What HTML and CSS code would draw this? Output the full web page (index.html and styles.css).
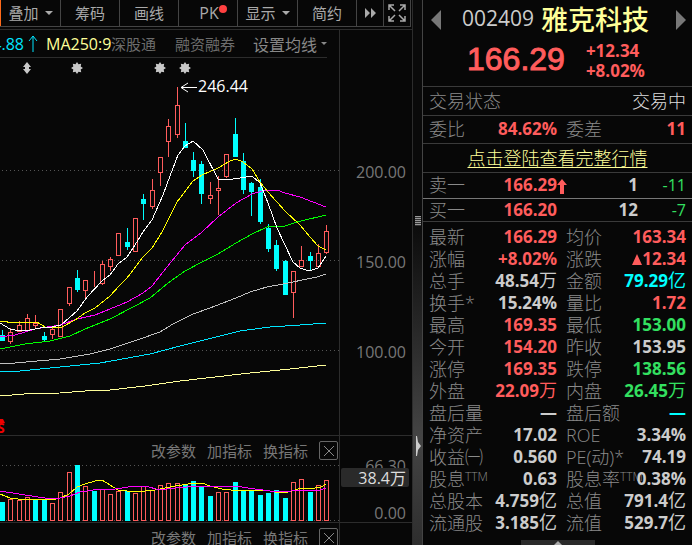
FILE: index.html
```html
<!DOCTYPE html>
<html lang="zh-CN">
<head>
<meta charset="utf-8">
<title>雅克科技 002409</title>
<link rel="stylesheet" href="styles.css">
</head>
<body>
<main class="app">
  <section class="chart">
    <nav class="toolbar">
      <button class="tool tool-active">叠加<i class="caret"></i></button>
      <button class="tool">筹码</button>
      <button class="tool">画线</button>
      <button class="tool tool-pk">PK<i class="dot"></i></button>
      <button class="tool">显示<i class="caret"></i></button>
      <button class="tool">简约</button>
      <button class="tool tool-icon" aria-label="更多">
        <svg width="13" height="10" viewBox="0 0 13 10"><path d="M1 0L6 5L1 10ZM7 0L12 5L7 10Z" fill="#aaa"/></svg>
      </button>
      <button class="tool tool-icon" aria-label="全屏">
        <svg width="18" height="18" viewBox="0 0 18 18" fill="none" stroke="#aaa" stroke-width="1.5"><path d="M1 6V1H6M12 1H17V6M17 12V17H12M6 17H1V12M1 1L7 7M17 1L11 7M17 17L11 11M1 17L7 11"/></svg>
      </button>
    </nav>

    <div class="panes">
      <div class="pane">
        <div class="legend">
          <span class="ma120">4.88</span>
          <svg class="up" width="10" height="17" viewBox="0 0 10 17" fill="none" stroke="#00e5ff"><path d="M5 17V1M1 6L5 1L9 6"/></svg>
          <span class="ma250">MA250:9</span>
          <a class="tag" href="#sgt">深股通</a>
          <a class="tag tag-margin" href="#rzrq">融资融券</a>
          <button class="ma-set">设置均线<i class="caret"></i></button>
        </div>
        <svg class="plot" id="price" viewBox="0 0 339 377" shape-rendering="crispEdges">
          <g transform="translate(0 -58)">
            <path class="dots" d="M2 170.5H339M2 260.5H339M2 350.5H339"/>
            <g id="candles"></g>
            <polyline class="line" stroke="#ffff99" points="0,396 24,394 60,393 85,391 110,390 145,386 180,381 215,377 250,373 290,369 326,365"/>
            <polyline class="line" stroke="#00e5ff" points="0,371 20,371 60,367 100,363 128,358 150,354 180,346 200,341 220,336 240,331 270,327 300,325 326,323"/>
            <polyline class="line" stroke="#c0c0c0" points="0,363 15,363 60,359 90,354 110,349 140,339 160,332 173,324 193,314 210,308 236,298 250,292 267,287 283,284 317,277 326,274"/>
            <polyline class="line" stroke="#00ff00" points="0,349 25,344 50,341 70,336 85,329 110,319 135,306 150,298 168,283 185,271 202,262 218,254 236,243 252,234 267,227 285,226 297,222 326,215"/>
            <polyline class="line" stroke="#ff00ff" points="0,337 15,335 35,329 60,325 77,319 95,315 110,309 127,302 143,293 152,286 167,267 185,245 202,232 218,217 236,203 252,194 262,191 277,190 285,193 300,197 326,207"/>
            <polyline class="line" stroke="#ffff00" points="0,321 15,323 37,322 45,327 52,328 62,327 75,320 85,313 95,308 110,296 119,286 127,278 143,257 152,248 162,232 177,202 193,181 202,175 218,168 230,161 236,159 243,162 252,169 260,182 268,192 285,211 300,225 310,237 318,246 326,250"/>
            <polyline class="line" stroke="#ffffff" points="0,323 10,329 20,331 30,330 40,328 52,327 61,325 77,311 87,297 102,281 110,275 118,264 127,257 135,245 143,232 152,220 163,195 170,176 178,155 185,146 193,141 203,150 218,179 226,180 240,178 252,176 260,183 268,203 277,228 285,245 293,262 300,268 309,271 318,268 326,256"/>
            <g class="marks">
              <path d="M27 62L31 67H29V69H31L27 74L23 69H25V67H23Z"/>
              <g id="stars"></g>
            </g>
            <path class="pointer" d="M181 87.5H197M188 83L181 87.5L188 92"/>
            <text class="peak" x="198" y="92">246.44</text>
            <g shape-rendering="auto">
              <path d="M-2 423L0 419H3L5 423Z" fill="#f00000"/>
              <text class="bonus" x="-3" y="433">S</text>
            </g>
          </g>
        </svg>
      </div>
      <div class="axis axis-price"><span>200.00</span><span>150.00</span><span>100.00</span></div>

      <div class="pane">
        <div class="actions">
          <button>改参数</button><button>加指标</button><button>换指标</button>
          <button class="close" aria-label="关闭"><svg width="10" height="10" viewBox="0 0 10 10" stroke="#888"><path d="M0 0L10 10M10 0L0 10"/></svg></button>
        </div>
        <svg class="plot" id="volume" viewBox="0 0 339 60" shape-rendering="crispEdges">
          <g transform="translate(0 -462)">
            <path class="dots" d="M2 465.5H339M2 520.5H339"/>
            <g id="bars"></g>
            <polyline class="line" stroke="#ffff00" points="0,494 10,498 18,499 45,499 52,500 60,498 69,494 77,487 85,484 95,481 102,480 110,485 118,490 135,492 155,490 175,486 195,483 202,483 210,486 222,489 240,491 265,490 275,492 285,493 298,489 315,488 321,487 326,484"/>
            <polyline class="line" stroke="#ff00ff" points="0,491 25,495 45,498 55,499 70,496 80,492 100,489 115,489 135,486 145,486 160,490 175,488 200,486 235,486 255,489 270,491 285,492 298,490 320,490 326,488"/>
          </g>
        </svg>
      </div>
      <div class="axis axis-volume"><span>66.30</span><span>0.00</span><output class="badge">38.4万</output></div>

      <div class="pane">
        <div class="actions">
          <button>改参数</button><button>加指标</button><button>换指标</button>
          <button class="close" aria-label="关闭"><svg width="10" height="10" viewBox="0 0 10 10" stroke="#888"><path d="M0 0L10 10M10 0L0 10"/></svg></button>
        </div>
      </div>
      <div class="axis"></div>
    </div>
  </section>

  <div class="splitter">
    <i class="grip"></i>
    <svg class="collapse" width="5" height="20" viewBox="0 0 5 20"><path d="M0 0H1L2 6L5 10L2 14L1 20H0Z" fill="#ccc"/></svg>
  </div>

  <aside class="quote">
    <header class="head">
      <div class="name-row">
        <button class="step" aria-label="上一只"><svg width="10" height="20" viewBox="0 0 10 20"><path d="M10 0V20L0 10Z" fill="#777"/></svg></button>
        <h1><span class="code">002409</span><span class="name">雅克科技</span></h1>
        <button class="step" aria-label="下一只"><svg width="10" height="20" viewBox="0 0 10 20"><path d="M0 0V20L10 10Z" fill="#777"/></svg></button>
      </div>
      <div class="price-row">
        <strong class="price">166.29</strong>
        <div class="change"><span>+12.34</span><span>+8.02%</span></div>
      </div>
    </header>
    <div class="state"><span>交易状态</span><span class="open">交易中</span></div>
    <table class="grid ratio">
      <colgroup><col class="c-label"><col class="c-value"><col class="c-label2"><col></colgroup>
      <tr><th>委比</th><td class="red">84.62%</td><th>委差</th><td class="red">11</td></tr>
    </table>
    <div class="login"><a href="#login">点击登陆查看完整行情</a></div>
    <table class="book">
      <colgroup><col class="c-label"><col><col class="c-arrow"><col class="c-qty"><col class="c-delta"></colgroup>
      <tr><th>卖一</th><td class="red">166.29</td><td class="mark"><svg class="tick" width="10" height="15" viewBox="0 0 10 15"><path d="M5 0L10 6H7V15H3V6H0Z" fill="#ff5c5c"/></svg></td><td>1</td><td class="delta">-11</td></tr>
      <tr><th>买一</th><td class="red">166.20</td><td></td><td>12</td><td class="delta">-7</td></tr>
    </table>
    <table class="grid stats">
      <colgroup><col class="c-label"><col class="c-value"><col class="c-label2"><col></colgroup>
      <tr><th>最新</th><td class="red">166.29</td><th>均价</th><td class="red">163.34</td></tr>
      <tr><th>涨幅</th><td class="red">+8.02%</td><th>涨跌</th><td class="red"><svg width="10" height="11" viewBox="0 0 10 11"><path d="M5 0L10 11H0Z" fill="#ff5c5c"/></svg>12.34</td></tr>
      <tr><th>总手</th><td>48.54<b>万</b></td><th>金额</th><td class="cyan">79.29<b>亿</b></td></tr>
      <tr><th>换手*</th><td>15.24%</td><th>量比</th><td class="red">1.72</td></tr>
      <tr><th>最高</th><td class="red">169.35</td><th>最低</th><td class="green">153.00</td></tr>
      <tr><th>今开</th><td class="red">154.20</td><th>昨收</th><td>153.95</td></tr>
      <tr><th>涨停</th><td class="red">169.35</td><th>跌停</th><td class="green">138.56</td></tr>
      <tr><th>外盘</th><td class="red">22.09<b>万</b></td><th>内盘</th><td class="green">26.45<b>万</b></td></tr>
      <tr><th>盘后量</th><td>—</td><th>盘后额</th><td class="cyan">—</td></tr>
      <tr><th>净资产</th><td>17.02</td><th>ROE</th><td>3.34%</td></tr>
      <tr><th>收益㈠</th><td>0.560</td><th>PE(动)*</th><td>74.19</td></tr>
      <tr><th>股息<sup>TTM</sup></th><td>0.63</td><th>股息率<sup>TTM</sup></th><td>0.38%</td></tr>
      <tr><th>总股本</th><td>4.759<b>亿</b></td><th>总值</th><td>791.4<b>亿</b></td></tr>
      <tr><th>流通股</th><td>3.185<b>亿</b></td><th>流值</th><td>529.7<b>亿</b></td></tr>
    </table>
    <button class="expand" aria-label="展开"><svg width="8" height="4" viewBox="0 0 8 4"><path d="M0 4L4 0L8 4Z" fill="#aaa"/></svg></button>
  </aside>
</main>
<script src="app.js"></script>
</body>
</html>
```
FILE: styles.css
```css
* { box-sizing: border-box; }

body {
  margin: 0;
  background: #070707;
  color: #ccc;
  font-family: "Open Sans", "Noto Sans CJK SC", sans-serif;
  font-size: 16px;
  white-space: nowrap;
}

button {
  margin: 0;
  padding: 0;
  border: 0;
  background: none;
  color: inherit;
  font: inherit;
}

a { color: inherit; text-decoration: none; }
svg { display: block; }

.app {
  display: flex;
  height: 100vh;
  overflow: hidden;
}

/* Chart side */
.chart {
  flex: 1;
  min-width: 0;
  border-right: 1px solid #2c2c2c;
}

.toolbar {
  display: grid;
  grid-template-columns: 61fr 59fr 59fr 59fr 60fr 59fr 27px 27px;
  height: 27px;
  margin-right: 1px;
  border-bottom: 1px solid #444;
}

.tool {
  display: flex;
  align-items: center;
  justify-content: center;
  gap: 6px;
  border-right: 1px solid #444;
  color: #aaa;
  font-size: 15px;
  line-height: 26px;
}

.tool-active { border-left: 1px solid #ff6a1a; }
.tool-pk { gap: 0; padding-left: 10px; font-size: 16px; }

.caret {
  border: 4px solid transparent;
  border-top-color: #aaa;
  border-bottom: 0;
}

.dot {
  width: 8px;
  height: 8px;
  margin-bottom: 8px;
  border-radius: 50%;
  background: #ff4040;
}

.panes {
  display: grid;
  grid-template-columns: 1fr 73px;
  grid-template-rows: 406px 87px 1fr;
  margin-top: 2px;
  border-top: 1px solid #2c2c2c;
}

.pane, .axis { border-bottom: 1px solid #2c2c2c; }
.pane { min-width: 0; }

.axis {
  position: relative;
  border-left: 1px solid #2c2c2c;
  padding-right: 6px;
  color: #777;
  text-align: right;
}

.axis span { display: block; }

.legend {
  display: flex;
  align-items: center;
  height: 28px;
  margin-right: 12px;
  border-bottom: 1px solid #2c2c2c;
}

.ma120 {
  display: flex;
  flex: none;
  justify-content: flex-end;
  width: 24px;
  overflow: hidden;
  color: #00e5ff;
}

.up { flex: none; margin: 0 8px 0 4px; }
.ma250 { width: 65px; color: #ffff99; }
.tag { color: #6c6c6c; font-size: 15px; }
.tag-margin { margin: 0 18px 0 19px; }

.ma-set {
  display: flex;
  align-items: center;
  gap: 4px;
  color: #888;
}

.ma-set .caret { border-width: 3px; border-bottom: 0; border-top-color: #888; }

.plot { width: 100%; overflow: hidden; }
.dots { stroke: #555; stroke-dasharray: 1 3; }
.line { fill: none; stroke-width: 1; }
.marks { fill: #c8c8c8; shape-rendering: auto; }
.up-bar { fill: none; stroke: #ff5c5c; }
.down-bar { fill: #00ffff; }
.pointer { fill: none; stroke: #fff; shape-rendering: auto; }
.peak { fill: #fff; font-size: 16px; }
.bonus { fill: #f00000; font-size: 14px; font-weight: 700; }

.axis-price { padding-top: 130px; }
.axis-price span { height: 90px; line-height: 24px; }

.axis-volume {
  display: flex;
  flex-direction: column;
  justify-content: space-between;
  padding-top: 21px;
  line-height: 18px;
}

.badge {
  position: absolute;
  top: 32px;
  right: 3px;
  left: 1px;
  height: 19px;
  padding-right: 3px;
  border-radius: 2px;
  background: #2a2a2a;
  color: #ddd;
  line-height: 20px;
}

.actions {
  display: flex;
  align-items: center;
  justify-content: flex-end;
  gap: 11px;
  height: 26px;
  padding: 3px 1px 0 0;
  color: #777;
  font-size: 15px;
  line-height: 20px;
}

.close {
  display: grid;
  place-items: center;
  width: 19px;
  height: 19px;
  border: 1px solid #666;
  border-radius: 2px;
}

/* Divider between the chart and the quote */
.splitter {
  position: relative;
  width: 9px;
  background: linear-gradient(#0a0a0a 40%, #444 80%, #2e2e2e);
}

.grip {
  position: absolute;
  top: 216px;
  left: 2px;
  width: 6px;
  height: 10px;
  background: repeating-linear-gradient(#999 0 1px, #333 1px 2px);
}

.collapse { position: absolute; top: 436px; left: 3px; }

/* Quote side */
.quote {
  position: relative;
  width: 270px;
  border-left: 1px solid #444;
}

.head { height: 87px; border-bottom: 1px solid #3a3a3a; }

.name-row {
  display: flex;
  align-items: center;
  justify-content: space-between;
  height: 40px;
  padding: 0 6px 0 8px;
}

h1 {
  display: flex;
  align-items: center;
  gap: 7px;
  margin: 0 6px 0 0;
  font-weight: 400;
  line-height: 40px;
}

.code { font-size: 21px; line-height: 36px; padding-bottom: 4px; }
.name { color: #ffff99; font-size: 27px; font-weight: 500; }

.price-row {
  display: flex;
  align-items: center;
  gap: 21px;
  padding-left: 44px;
  color: #ff5c5c;
}

.price {
  padding-bottom: 3px;
  font-family: "Liberation Sans", sans-serif;
  font-size: 32px;
  font-weight: 400;
  line-height: 38px;
  -webkit-text-stroke: 1px #ff5c5c;
}

.change {
  display: grid;
  font-size: 17px;
  font-weight: 700;
  line-height: 20px;
}

.state {
  display: flex;
  justify-content: space-between;
  padding: 0 6px;
  border-bottom: 1px solid #3a3a3a;
  color: #8a8a8a;
  font-size: 18px;
  font-weight: 300;
  line-height: 28px;
}

.open { color: #ddd; }

table {
  width: 100%;
  table-layout: fixed;
  border-collapse: collapse;
}

th, td { padding: 0; line-height: 22px; }
tr { height: 22px; }

th {
  color: #8a8a8a;
  font-size: 18px;
  font-weight: 300;
  text-align: left;
}

td {
  font-size: 17px;
  font-weight: 700;
  text-align: right;
}

td b { font-size: 18px; font-weight: 400; line-height: 20px; }
td svg { display: inline-block; }

.grid td:last-child, .book td:last-child { padding-right: 6px; }
.grid th, .book th { padding-left: 6px; }
.grid th + td + th { padding-left: 9px; }
.c-label { width: 60px; }
.c-value { width: 74px; }
.c-label2 { width: 55px; }
.c-arrow { width: 13px; }
.c-qty { width: 68px; }
.c-delta { width: 54px; }

.ratio { border-bottom: 1px solid #3a3a3a; }
.ratio tr { height: 27px; }

.login {
  border-bottom: 1px solid #3a3a3a;
  color: #ffff99;
  font-size: 18px;
  font-weight: 300;
  line-height: 28px;
  text-align: center;
}

.login a { text-decoration: underline; text-underline-offset: 2px; }

.book { border-bottom: 1px solid #3a3a3a; }
.book tr:first-child { height: 26px; border-bottom: 1px solid #777; }
.book .delta { color: #33e060; font-size: 16px; font-weight: 400; }
.book .mark { text-align: left; line-height: 18px; }
.tick { vertical-align: middle; }

.stats { margin-top: 4px; }

sup {
  font-size: 12px;
  line-height: 12px;
  vertical-align: 5px;
}

.red { color: #ff5c5c; }
.green { color: #33e060; }
.cyan { color: #00ffff; }

.expand {
  position: absolute;
  bottom: 0;
  left: 98px;
  display: grid;
  place-items: center;
  width: 74px;
  height: 5px;
  background: #2a2a2a;
}
```
FILE: app.js
```js
// Each candle: centre x, high, body top, body bottom, low, falling (1) or rising (0), volume top
const data = [
  [2,330,335,341,341,1,502],[10,328,332,341,344,0,499],[19,321,325,331,331,0,500],
  [27,314,318,330,330,0,497],[35,315,323,325,328,0,499,1],[44,332,336,340,341,1,499],
  [52,327,329,334,339,0,503],[60,309,309,336,337,0,492],[69,287,287,303,306,0,472],
  [77,270,278,290,292,1,465],[85,280,280,290,299,0,486],[94,271,282,282,287,0,491,1],
  [102,261,264,283,285,0,489],[110,257,259,266,271,0,494],[118,233,233,255,255,0,491],
  [127,228,242,247,250,1,491],[135,218,218,251,251,0,493],[143,194,199,204,220,1,486,2],
  [152,179,190,206,209,0,490],[160,157,157,172,186,0,485],[168,119,126,141,157,0,483],
  [177,87,105,134,138,0,483],[185,123,141,148,148,1,485],[193,152,160,171,177,1,481],
  [201,161,164,194,204,1,487],[210,182,195,198,204,0,496,1],[218,176,188,190,215,0,492],
  [226,154,154,176,178,0,492],[235,118,134,157,157,1,482],[243,153,161,190,194,1,491],
  [251,182,183,192,216,1,491],[260,179,187,222,224,1,495],[268,224,228,249,252,1,493],
  [276,240,245,269,271,1,490],[285,260,261,295,295,1,498],[293,271,271,292,318,0,482],
  [301,246,260,266,266,0,479],[310,252,256,261,270,1,492],[318,244,253,266,268,0,485],
  [326,225,231,252,254,0,480]
];

const NS = "http://www.w3.org/2000/svg";

function add(parent, tag, attrs) {
  const el = document.createElementNS(NS, tag);
  for (const key in attrs) el.setAttribute(key, attrs[key]);
  document.getElementById(parent).appendChild(el);
}

function bar(parent, x, top, bottom, falling) {
  if (falling) {
    add(parent, "rect", { class: "down-bar", x: x - 2, y: top, width: 5, height: bottom - top });
  } else {
    add(parent, "rect", { class: "up-bar", x: x - 1.5, y: top + 0.5, width: 4, height: bottom - top });
  }
}

for (const [x, high, top, bottom, low, falling, volume, flip] of data) {
  const color = falling ? "#00ffff" : "#ff5c5c";
  const c = x + 0.5;
  add("candles", "path", { stroke: color, d: `M${c} ${high}V${top}M${c} ${bottom}V${low}` });
  bar("candles", x, top, bottom, falling);
  // flip: volume bar drawn in the colour opposite to the candle
  const filled = flip ? !falling : Boolean(falling);
  bar("bars", x, volume, filled ? 521 : 520, filled);
}

for (const x of [77, 160, 185]) {
  let d = "";
  for (let i = 0; i < 16; i++) {
    const r = i % 2 ? 4 : 6;
    const a = i * Math.PI / 8;
    d += `${i ? "L" : "M"}${(x + r * Math.cos(a)).toFixed(1)} ${(68 + r * Math.sin(a)).toFixed(1)}`;
  }
  add("stars", "path", { d: d + "Z" });
}
```
